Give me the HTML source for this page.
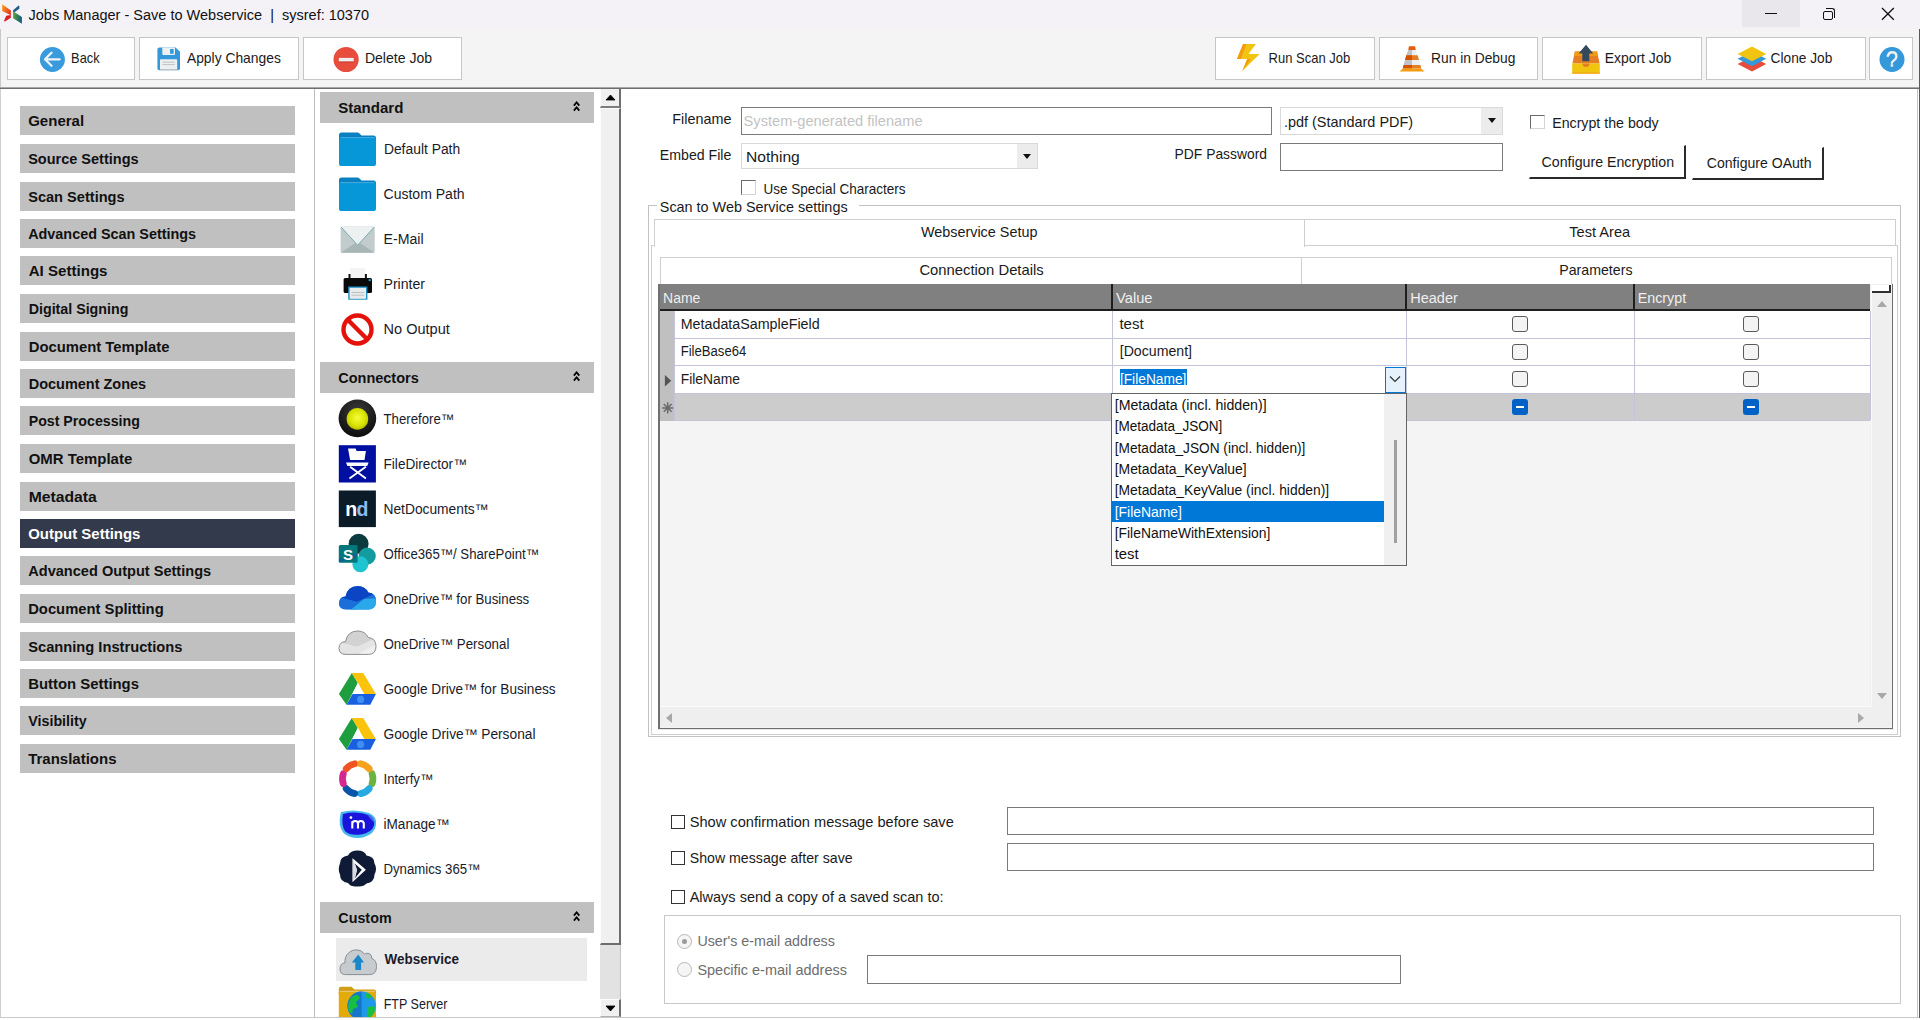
<!DOCTYPE html>
<html><head><meta charset="utf-8">
<style>
*{box-sizing:border-box;margin:0;padding:0}
html,body{width:1920px;height:1020px;overflow:hidden;background:#fff;font-family:"Liberation Sans",sans-serif;color:#000}
.a{position:absolute}
#title{left:0;top:0;width:1920px;height:29px;background:#f4f1f7}
#title .t{left:30px;top:5.5px;font-size:15.5px;color:#111;white-space:pre}
#tb{left:0;top:29px;width:1920px;height:59px;background:#f4f4f4;border-left:1px solid #c8c8c8}
#tbline{left:0;top:87px;width:1920px;height:2px;background:#6e6e6e;border-top:1px solid #a8a8a8}
.btn{background:#fff;border:1px solid #c6c6c6;height:43px;top:37px}
.btn .l{position:absolute;top:12px;font-size:14.5px;color:#1a1a1a;white-space:nowrap}
#side{left:0;top:89px;width:315px;height:928px;background:#fff;border-left:1px solid #cfcfcf;border-right:1px solid #bcbcbc}
.si{left:20px;width:275px;height:29px;background:#c0c0c0;font-weight:bold;font-size:15px;color:#111;padding-left:8px;line-height:29px}
.x{display:inline-block;transform-origin:0 0}
.si.sel{background:#333a4b;color:#fff}
#mid{left:315px;top:89px;width:285px;height:928px;background:#fff}
.sh{left:320px;width:274px;height:31px;background:#c0c0c0;font-weight:bold;font-size:15px;color:#111;padding-left:18px;line-height:31px}
.sh .chev{position:absolute;left:250px;top:0}
.it{left:383px;font-size:14px;color:#1a1a2a;white-space:nowrap;margin-top:1px}
.ic{left:339px;width:37px;height:37px}
#vs{left:600px;top:89px;width:21px;height:928px;background:#e2e2e2}
#main{left:621px;top:89px;width:1296px;height:928px;background:#fff}
.lbl{font-size:14.5px;color:#1a1a1a;white-space:nowrap}
</style></head><body>
<!-- title bar -->
<div id="title" class="a">
  <svg class="a" style="left:0px;top:0px" width="26" height="28" viewBox="0 0 26 28">
    <defs><linearGradient id="lg1" x1="0" y1="0" x2="1" y2="0.6"><stop offset="0" stop-color="#f9a51a"></stop><stop offset="1" stop-color="#e53a22"></stop></linearGradient>
    <linearGradient id="lg2" x1="0" y1="0" x2="1" y2="0.3"><stop offset="0" stop-color="#5cae3b"></stop><stop offset="1" stop-color="#1b5c78"></stop></linearGradient></defs>
    <path d="M2.2 4.2L10.9 10.6V15.2L2.2 10.9Z" fill="url(#lg1)"></path>
    <path d="M10.9 15L10.9 17.8L4.6 21.8L4.2 20.6L6.2 15.8Z" fill="#d9202a"></path>
    <path d="M18.6 5.6Q19.6 5.8 19.5 8.6L13.1 13.2V10.2Z" fill="#1d5f86"></path>
    <path d="M13.1 11.3L21.9 16.9V23.8L13.1 18.2Z" fill="url(#lg2)"></path>
  </svg>
  <div class="a t" style="transform-origin: 0px 0px; transform: translateX(-1.5px) scaleX(0.936);">Jobs Manager - Save to Webservice  |  sysref: 10370</div>
  <div class="a" style="left:1742px;top:0;width:58px;height:27px;background:#e9e6ec"></div>
  <div class="a" style="left:1765px;top:13px;width:12px;height:1.3px;background:#111"></div>
  <div class="a" style="left:1823px;top:10.5px;width:9.5px;height:9.5px;border:1.2px solid #111;border-radius:2px;background:#f4f1f7"></div>
  <div class="a" style="left:1825.5px;top:8px;width:9.5px;height:9.5px;border-top:1.2px solid #111;border-right:1.2px solid #111;border-radius:0 3px 0 0"></div>
  <svg class="a" style="left:1881px;top:7px" width="14" height="14" viewBox="0 0 14 14"><path d="M1 1L12.8 12.8M12.8 1L1 12.8" stroke="#111" stroke-width="1.3"></path></svg>
</div>
<!-- toolbar -->
<div id="tb" class="a"></div>
<div id="tbline" class="a"></div>

<div class="a btn" style="left:7px;width:128px">

  <div class="l" style="left: 65px; transform-origin: 0px 0px; transform: translateX(-1.9px) scaleX(0.8832);">Back</div>
</div>
<div class="a btn" style="left:139px;width:160px">

  <div class="l" style="left: 47px; transform-origin: 0px 0px; transform: translateX(-0.1px) scaleX(0.9554);">Apply Changes</div>
</div>
<div class="a btn" style="left:303px;width:159px">

  <div class="l" style="left: 61px; transform-origin: 0px 0px; transform: translateX(-0.1px) scaleX(0.9696);">Delete Job</div>
</div>
<div class="a btn" style="left:1215px;width:160px">

  <div class="l" style="left: 52px; transform-origin: 0px 0px; transform: translateX(0.6px) scaleX(0.8968);">Run Scan Job</div>
</div>
<div class="a btn" style="left:1379px;width:159px">

  <div class="l" style="left: 51px; transform-origin: 0px 0px; transform: translateX(0.1px) scaleX(0.9501);">Run in Debug</div>
</div>
<div class="a btn" style="left:1542px;width:160px">

  <div class="l" style="left: 61px; transform-origin: 0px 0px; transform: translateX(0.7px) scaleX(0.9615);">Export Job</div>
</div>
<div class="a btn" style="left:1706px;width:160px">

  <div class="l" style="left: 63px; transform-origin: 0px 0px; transform: translateX(0.6px) scaleX(0.9441);">Clone Job</div>
</div>
<div class="a btn" style="left:1869px;width:44px">

</div>

<div id="side" class="a"></div>
<div class="a si" style="top:106px"><span class="x" style="transform-origin: 0px 0px; transform: translateX(0.15px) scaleX(1.0023);">General</span></div>
<div class="a si" style="top:144px"><span class="x" style="transform-origin: 0px 0px; transform: translateX(0.15px) scaleX(0.9673);">Source Settings</span></div>
<div class="a si" style="top:182px"><span class="x" style="transform-origin: 0px 0px; transform: translateX(0.15px) scaleX(0.9725);">Scan Settings</span></div>
<div class="a si" style="top:219px"><span class="x" style="transform-origin: 0px 0px; transform: translateX(0.15px) scaleX(0.9594);">Advanced Scan Settings</span></div>
<div class="a si" style="top:256px"><span class="x" style="transform-origin: 0px 0px; transform: translateX(0.7px) scaleX(1.0059);">AI Settings</span></div>
<div class="a si" style="top:294px"><span class="x" style="transform-origin: 0px 0px; transform: translateX(0.7px) scaleX(0.949);">Digital Signing</span></div>
<div class="a si" style="top:332px"><span class="x" style="transform-origin: 0px 0px; transform: translateX(0.7px) scaleX(0.989);">Document Template</span></div>
<div class="a si" style="top:369px"><span class="x" style="transform-origin: 0px 0px; transform: translateX(0.7px) scaleX(0.9653);">Document Zones</span></div>
<div class="a si" style="top:406px"><span class="x" style="transform-origin: 0px 0px; transform: translateX(0.7px) scaleX(0.9455);">Post Processing</span></div>
<div class="a si" style="top:444px"><span class="x" style="transform-origin: 0px 0px; transform: translateX(0.7px) scaleX(0.9961);">OMR Template</span></div>
<div class="a si" style="top:482px"><span class="x" style="transform-origin: 0px 0px; transform: translateX(0.7px) scaleX(1.0479);">Metadata</span></div>
<div class="a si sel" style="top:519px"><span class="x" style="transform-origin: 0px 0px; transform: translateX(0.2px) scaleX(0.9973);">Output Settings</span></div>
<div class="a si" style="top:556px"><span class="x" style="transform-origin: 0px 0px; transform: translateX(0.2px) scaleX(0.9715);">Advanced Output Settings</span></div>
<div class="a si" style="top:594px"><span class="x" style="transform-origin: 0px 0px; transform: translateX(0.2px) scaleX(0.9853);">Document Splitting</span></div>
<div class="a si" style="top:632px"><span class="x" style="transform-origin: 0px 0px; transform: translateX(0.2px) scaleX(0.9788);">Scanning Instructions</span></div>
<div class="a si" style="top:669px"><span class="x" style="transform-origin: 0px 0px; transform: translateX(0.2px) scaleX(0.9923);">Button Settings</span></div>
<div class="a si" style="top:706px"><span class="x" style="transform-origin: 0px 0px; transform: translateX(0.2px) scaleX(0.9533);">Visibility</span></div>
<div class="a si" style="top:744px"><span class="x" style="transform-origin: 0px 0px; transform: translateX(0.2px) scaleX(0.9993);">Translations</span></div>
<div id="mid" class="a"></div>
<div class="a sh" style="top:92px"><span class="x" style="transform-origin: 0px 0px; transform: translateX(0.2px) scaleX(1.0029);">Standard</span><svg class="chev" width="20" height="31" viewBox="0 0 20 31"><path d="M3.9 13.6L6.6 10.3L9.3 13.6M3.9 18.6L6.6 15.3L9.3 18.6" stroke="#000" stroke-width="1.8" fill="none"></path></svg></div>
<svg class="a ic" style="top:131px" viewBox="0 0 37 37"><path d="M0 4Q0 1.4 2.5 1.4H18.5Q19.5 1.4 20.5 2.4L22.5 4.4H34.5Q37 4.4 37 7V9H0Z" fill="#0b80c0"></path><rect x="0" y="6.2" width="37" height="28.9" rx="2.6" fill="#0597d8"></rect><rect x="1.5" y="6.2" width="34" height="0.9" fill="#4fb0e0"></rect></svg>
<div class="a it" style="top: 140px; transform-origin: 0px 0px; transform: translateX(0.9px) scaleX(0.99);">Default Path</div>
<svg class="a ic" style="top:176px" viewBox="0 0 37 37"><path d="M0 4Q0 1.4 2.5 1.4H18.5Q19.5 1.4 20.5 2.4L22.5 4.4H34.5Q37 4.4 37 7V9H0Z" fill="#0b80c0"></path><rect x="0" y="6.2" width="37" height="28.9" rx="2.6" fill="#0597d8"></rect><rect x="1.5" y="6.2" width="34" height="0.9" fill="#4fb0e0"></rect></svg>
<div class="a it" style="top: 185px; transform-origin: 0px 0px; transform: translateX(0.5px) scaleX(1.002);">Custom Path</div>
<svg class="a ic" style="top:221px;overflow:visible" viewBox="0 0 37 37"><rect x="1.6" y="5.6" width="34.1" height="26.1" rx="1.8" fill="#c3cccc"></rect><path d="M1.6 31.7L18.7 20.5L35.7 31.7Z" fill="#a9b6b6"></path><path d="M1.6 5.6H35.7L18.7 24.4Z" fill="#eef1f1"></path><path d="M2 6L18.7 24.2L35.3 6" fill="none" stroke="#6aa5aa" stroke-width="0.9"></path></svg>
<div class="a it" style="top: 230px; transform-origin: 0px 0px; transform: translateX(0.5px) scaleX(1.0111);">E-Mail</div>
<svg class="a ic" style="top:266px;overflow:visible" viewBox="0 0 37 37"><rect x="11.2" y="2" width="15" height="10" fill="#f4f4f4"></rect><rect x="9.5" y="8" width="2" height="4" fill="#111"></rect><rect x="25.9" y="8" width="2" height="4" fill="#111"></rect><rect x="4.6" y="11.9" width="28.4" height="15.1" rx="1.5" fill="#0a0a0a"></rect><rect x="9.2" y="20.5" width="19.2" height="13.2" fill="#1b8fc4"></rect><rect x="10.6" y="21.8" width="16.4" height="11" fill="#e8eced"></rect><path d="M12.5 26.5H25M12.5 29.2H25" stroke="#b9c0c4" stroke-width="1"></path><circle cx="30.7" cy="14.1" r="1.2" fill="#1fa6e0"></circle></svg>
<div class="a it" style="top: 275px; transform-origin: 0px 0px; transform: translateX(0.5px) scaleX(1.0066);">Printer</div>
<svg class="a ic" style="top:311px" viewBox="0 0 37 37"><circle cx="18.5" cy="18.5" r="14" fill="none" stroke="#e3120b" stroke-width="4.4"></circle><path d="M9 9L28 28" stroke="#e3120b" stroke-width="4.4"></path></svg>
<div class="a it" style="top: 320px; transform-origin: 0px 0px; transform: translateX(0.5px) scaleX(1.0393);">No Output</div>
<div class="a sh" style="top:362px"><span class="x" style="transform-origin: 0px 0px; transform: translateX(0.2px) scaleX(0.9667);">Connectors</span><svg class="chev" width="20" height="31" viewBox="0 0 20 31"><path d="M3.9 13.6L6.6 10.3L9.3 13.6M3.9 18.6L6.6 15.3L9.3 18.6" stroke="#000" stroke-width="1.8" fill="none"></path></svg></div>
<svg class="a ic" style="top:401px;overflow:visible" viewBox="0 0 37 37"><defs><radialGradient id="tg" cx="0.5" cy="0.45" r="0.55"><stop offset="0" stop-color="#f4ff3a"></stop><stop offset="0.7" stop-color="#d8e000"></stop><stop offset="1" stop-color="#b9c000"></stop></radialGradient><radialGradient id="tg2" cx="0.5" cy="0.3" r="0.7"><stop offset="0" stop-color="#3a3a3a"></stop><stop offset="1" stop-color="#0d0d0d"></stop></radialGradient></defs><circle cx="18.4" cy="17.4" r="18.8" fill="url(#tg2)"></circle><circle cx="18.4" cy="17.9" r="10.8" fill="url(#tg)"></circle></svg>
<div class="a it" style="top: 410px; transform-origin: 0px 0px; transform: translateX(0.5px) scaleX(0.9443);">Therefore™</div>
<svg class="a ic" style="top:446px;overflow:visible" viewBox="0 0 37 37"><rect x="-0.2" y="-0.8" width="37.1" height="37.3" fill="#000f9f"></rect><path d="M9 2.5H16.6L17.6 5H26.9L25.5 13.9H11.1Z" fill="#fff"></path><path d="M7 16.6H29.6L28.2 20H8.4Z" fill="#fff"></path><path d="M10.4 32.4L26.9 20.7M26.9 32.4L11.1 20.7" stroke="#fff" stroke-width="1.9"></path></svg>
<div class="a it" style="top: 455px; transform-origin: 0px 0px; transform: translateX(0.5px) scaleX(0.9731);">FileDirector™</div>
<svg class="a ic" style="top:491px;overflow:visible" viewBox="0 0 37 37"><rect x="-0.2" y="-0.5" width="37.1" height="36.6" fill="#0b1b28"></rect><text x="6.3" y="25.1" font-family="Liberation Sans" font-weight="bold" font-size="19.5" letter-spacing="-0.8" fill="#fff">n<tspan fill="#8dbdf0">d</tspan></text></svg>
<div class="a it" style="top: 500px; transform-origin: 0px 0px; transform: translateX(0.5px) scaleX(0.984);">NetDocuments™</div>
<svg class="a ic" style="top:536px;overflow:visible" viewBox="0 0 37 37"><circle cx="19.6" cy="7.8" r="10" fill="#0b3b3e"></circle><circle cx="28.2" cy="20" r="8.6" fill="#139c9f"></circle><circle cx="21.4" cy="28.3" r="8" fill="#20c3d0"></circle><rect x="-0.2" y="9" width="18.8" height="17.8" rx="1.5" fill="#03787c"></rect><path d="M-0.2 23L18.6 17V20.5L-0.2 26.5Z" fill="#1b4f9e" opacity="0.5"></path><text x="4" y="23.5" font-family="Liberation Sans" font-weight="bold" font-size="15" fill="#fff">S</text></svg>
<div class="a it" style="top: 545px; transform-origin: 0px 0px; transform: translateX(0.5px) scaleX(0.9437);">Office365™/ SharePoint™</div>
<svg class="a ic" style="top:581px;overflow:visible" viewBox="0 0 37 37"><defs><clipPath id="odc"><path d="M7 28.4Q0 28.4 0 22.3Q0 16 6.5 15.6Q8.5 5 18.9 5Q26 5 29.3 11.5Q37 12.3 37 20.2Q37 28.4 29.5 28.4Z"></path></clipPath></defs>
<g clip-path="url(#odc)"><rect x="-1" y="0" width="40" height="30" fill="#1f7fe0"></rect><path d="M-1 0H40V11L18 21L-1 16Z" fill="#0c45c4"></path><path d="M-1 16L18 21L40 11V17L18 28.5H-1Z" fill="#1a6fd8"></path><path d="M12 28.5L25 18L40 17V30H12Z" fill="#29a8ea"></path></g></svg>
<div class="a it" style="top: 590px; transform-origin: 0px 0px; transform: translateX(0.5px) scaleX(0.946);">OneDrive™ for Business</div>
<svg class="a ic" style="top:626px;overflow:visible" viewBox="0 0 37 37"><defs><clipPath id="odc2"><path d="M7 28.4Q0 28.4 0 22.3Q0 16 6.5 15.6Q8.5 5 18.9 5Q26 5 29.3 11.5Q37 12.3 37 20.2Q37 28.4 29.5 28.4Z"></path></clipPath></defs>
<g clip-path="url(#odc2)"><rect x="-1" y="0" width="40" height="30" fill="#efefef"></rect><path d="M-1 0H40V11L18 21L-1 16Z" fill="#d2d2d2"></path><path d="M-1 16L18 21L40 11V17L18 28.5H-1Z" fill="#e4e4e4"></path></g>
<path d="M7 28.4Q0 28.4 0 22.3Q0 16 6.5 15.6Q8.5 5 18.9 5Q26 5 29.3 11.5Q37 12.3 37 20.2Q37 28.4 29.5 28.4Z" fill="none" stroke="#8e8e8e" stroke-width="1"></path></svg>
<div class="a it" style="top: 635px; transform-origin: 0px 0px; transform: translateX(0.5px) scaleX(0.9514);">OneDrive™ Personal</div>
<svg class="a ic" style="top:671px;overflow:visible" viewBox="0 0 37 37"><path d="M12.8 1.9L18.9 12L7.5 33.7L-0.1 23.1Z" fill="#1e9e3e"></path><path d="M12.8 1.9H24.2L36.9 23.1H25.3Z" fill="#fbc30b"></path><path d="M7.5 33.7H31.3L36.9 23.1H13.6Z" fill="#1a5fe0"></path><path d="M18.9 11.6L24.3 23.1H13.5Z" fill="#fff"></path><circle cx="21.6" cy="28.4" r="3.6" fill="#3d8ff2"></circle></svg>
<div class="a it" style="top: 680px; transform-origin: 0px 0px; transform: translateX(0.5px) scaleX(0.9747);">Google Drive™ for Business</div>
<svg class="a ic" style="top:716px;overflow:visible" viewBox="0 0 37 37"><path d="M12.8 1.9L18.9 12L7.5 33.7L-0.1 23.1Z" fill="#1e9e3e"></path><path d="M12.8 1.9H24.2L36.9 23.1H25.3Z" fill="#fbc30b"></path><path d="M7.5 33.7H31.3L36.9 23.1H13.6Z" fill="#1a5fe0"></path><path d="M18.9 11.6L24.3 23.1H13.5Z" fill="#fff"></path><circle cx="21.6" cy="28.4" r="3.6" fill="#3d8ff2"></circle></svg>
<div class="a it" style="top: 725px; transform-origin: 0px 0px; transform: translateX(0.5px) scaleX(0.9814);">Google Drive™ Personal</div>
<svg class="a ic" style="top:761px;overflow:visible" viewBox="0 0 37 37"><path d="M33.07 12.75A15.2 15.2 0 0 1 33.07 22.65" stroke="#6db33f" stroke-width="6.8" fill="none" stroke-linecap="round"></path><path d="M30.17 27.67A15.2 15.2 0 0 1 21.60 32.62" stroke="#27aae1" stroke-width="6.8" fill="none" stroke-linecap="round"></path><path d="M15.80 32.62A15.2 15.2 0 0 1 7.23 27.67" stroke="#0b55a8" stroke-width="6.8" fill="none" stroke-linecap="round"></path><path d="M4.33 22.65A15.2 15.2 0 0 1 4.33 12.75" stroke="#d6288f" stroke-width="6.8" fill="none" stroke-linecap="round"></path><path d="M7.23 7.73A15.2 15.2 0 0 1 15.80 2.78" stroke="#f05423" stroke-width="6.8" fill="none" stroke-linecap="round"></path><path d="M21.60 2.78A15.2 15.2 0 0 1 30.17 7.73" stroke="#f7a11a" stroke-width="6.8" fill="none" stroke-linecap="round"></path></svg>
<div class="a it" style="top: 770px; transform-origin: 0px 0px; transform: translateX(0.5px) scaleX(0.9363);">Interfy™</div>
<svg class="a ic" style="top:806px;overflow:visible" viewBox="0 0 37 37"><path d="M2 6Q16 2.5 30 7Q38 10 37 19Q36 28 24 31.5Q12 33.5 4.5 27Q-1 20 1.3 9Z" fill="#45b8ec"></path><path d="M4 8Q18 4.5 31 9.5Q36.5 13 35 19.5Q33 26.5 22 28.5Q11 30 6 25Q2 19 4 8Z" fill="#1a14dc"></path><path d="M28 8.5Q36 11 35.5 17L30 11Z" fill="#5a7ee8" opacity="0.8"></path>
<circle cx="11.9" cy="11.6" r="1.4" fill="#fff"></circle><path d="M13.3 22.5V15.2M13.3 17.8Q13.3 15 16.2 15Q19 15 19 17.8V22.5M19 17.8Q19 15 21.9 15Q24.8 15 24.8 17.8V22.5" stroke="#fff" stroke-width="2.1" fill="none"></path></svg>
<div class="a it" style="top: 815px; transform-origin: 0px 0px; transform: translateX(0.5px) scaleX(0.9715);">iManage™</div>
<svg class="a ic" style="top:851px;overflow:visible" viewBox="0 0 37 37"><path d="M18.5 -0.5Q25.5 -0.5 27.5 4.5Q35.5 5.5 35.5 12.5Q38.5 17.5 35.5 23.5Q35.5 31 27.5 32.5Q24.5 36 18.5 35.5Q11.5 36 9 32Q1 31 1 23.5Q-1.5 18 1 12.5Q1 5.5 9 4.5Q11.5 -0.5 18.5 -0.5Z" fill="#0f1a36"></path>
<path d="M13.6 7.2L26.9 18.7L13.6 31Z" fill="#fff"></path><path d="M15.8 12.5L22.8 18.7L15.8 27.5L18 19Z" fill="#0f1a36"></path><path d="M13.6 7.2L15.8 12.5L18 19L15.8 27.5L13.6 31Z" fill="#d8dbe2"></path></svg>
<div class="a it" style="top: 860px; transform-origin: 0px 0px; transform: translateX(0.5px) scaleX(0.942);">Dynamics 365™</div>
<div class="a sh" style="top:902px"><span class="x" style="transform-origin: 0px 0px; transform: translateX(0.3px) scaleX(0.9554);">Custom</span><svg class="chev" width="20" height="31" viewBox="0 0 20 31"><path d="M3.9 13.6L6.6 10.3L9.3 13.6M3.9 18.6L6.6 15.3L9.3 18.6" stroke="#000" stroke-width="1.8" fill="none"></path></svg></div>
<div class="a" style="left:336px;top:938px;width:251px;height:43px;background:#ebebeb"></div>
<svg class="a ic" style="top:941px;overflow:visible" viewBox="0 0 37 37"><path d="M6.5 33.6Q1 33.6 1 28Q1 22.5 6 21.8Q5.5 15.5 9.5 12Q13 8.5 17.5 8.8Q22.5 8.8 25.5 13Q27.5 11.8 30 12.5Q33 13.5 32.8 17.5Q37.5 19 37.5 25.5Q37.5 33.6 30.5 33.6Z" fill="#c6cbcf" stroke="#7f878c" stroke-width="0.9"></path>
<path d="M19.2 13.6L25 21.5H22.1V29H16.3V21.5H12.9Z" fill="#1a87c9"></path></svg>
<div class="a it" style="top: 950px; left: 385px; font-weight: bold; transform-origin: 0px 0px; transform: translateX(-0.5px) scaleX(0.9611);">Webservice</div>
<svg class="a ic" style="top:986px;overflow:visible" viewBox="0 0 37 37"><defs><clipPath id="ftpc"><rect x="-2" y="-2" width="41" height="33"></rect></clipPath></defs><g clip-path="url(#ftpc)">
<path d="M-0.2 3Q-0.2 0.7 2 0.7H12.5L15.5 3.5H35Q37 3.5 37 5.5V9H-0.2Z" fill="#cf9e12"></path><rect x="-0.2" y="4.8" width="37.2" height="30" rx="1.5" fill="#e3ab0a"></rect><rect x="1" y="4.8" width="35" height="1.2" fill="#e9c46a"></rect>
<circle cx="22.7" cy="19.8" r="14.2" fill="#1e98e8"></circle><path d="M22.7 5.6A14.2 14.2 0 0 0 22.7 34Z" fill="#1577c8"></path>
<path d="M11 13Q14 9 19 9L21 12L17 16L19 21L14 23L13 28L9.5 25Q8.5 19 11 13Z" fill="#17bf40"></path><path d="M28 22Q32 19 36 21Q36 28 31 32Q27 31 28 26Z" fill="#17c040"></path><path d="M26 7Q30 7.5 33 10L30 13L27 11Z" fill="#17c040"></path></g></svg>
<div class="a it" style="top: 995px; transform-origin: 0px 0px; transform: translateX(0.7px) scaleX(0.8946);">FTP Server</div>

<div id="main" class="a"></div>
<!-- form top -->
<div class="a lbl" style="left: 673px; top: 111px; transform-origin: 0px 0px; transform: translateX(-0.8px) scaleX(0.9925);">Filename</div>
<div class="a" style="left:741px;top:107px;width:531px;height:28px;border:1.5px solid #7a7a7a;background:#fff"></div>
<div class="a lbl" style="left: 744px; top: 113px; color: rgb(195, 195, 195); transform-origin: 0px 0px; transform: translateX(-0.4px) scaleX(1.0095);">System-generated filename</div>
<div class="a" style="left:1280px;top:107px;width:223px;height:28px;border:1px solid #d9d9d9;background:#fff"></div>
<div class="a" style="left:1481px;top:108px;width:21px;height:26px;background:#ececec"></div>
<svg class="a" style="left:1488px;top:118px" width="8" height="5" viewBox="0 0 8 5"><path d="M0 0H8L4 5Z" fill="#111"></path></svg>
<div class="a lbl" style="left: 1285px; top: 114px; transform-origin: 0px 0px; transform: translateX(-1.1px) scaleX(0.9957);">.pdf (Standard PDF)</div>
<div class="a" style="left:1530px;top:114.5px;width:14.5px;height:14.5px;border:1px solid #d4d4d4;border-left:1.6px solid #6a6a6a;border-top:1.6px solid #6a6a6a;background:#fff"></div>
<div class="a lbl" style="left: 1552px; top: 115px; transform-origin: 0px 0px; transform: translateX(0.2px) scaleX(0.9784);">Encrypt the body</div>

<div class="a lbl" style="left: 660px; top: 147px; transform-origin: 0px 0px; transform: translateX(-0.2px) scaleX(0.9759);">Embed File</div>
<div class="a" style="left:741px;top:143px;width:297px;height:26px;border:1px solid #d9d9d9;background:#fff"></div>
<div class="a" style="left:1017px;top:144px;width:20px;height:24px;background:#ececec"></div>
<svg class="a" style="left:1023px;top:154px" width="8" height="5" viewBox="0 0 8 5"><path d="M0 0H8L4 5Z" fill="#111"></path></svg>
<div class="a lbl" style="left: 746px; top: 149px; transform-origin: 0px 0px; transform: translateX(0px) scaleX(1.0759);">Nothing</div>
<div class="a lbl" style="left: 1175px; top: 146px; transform-origin: 0px 0px; transform: translateX(-0.4px) scaleX(0.955);">PDF Password</div>
<div class="a" style="left:1280px;top:143px;width:223px;height:28px;border:1.5px solid #7a7a7a;background:#fff"></div>
<div class="a" style="left:1529px;top:145px;width:157px;height:34px;border:1px solid #fff;border-right:2px solid #2a2a2a;border-bottom:2px solid #2a2a2a;background:#fff"></div>
<div class="a lbl" style="left: 1542px; top: 154px; transform-origin: 0px 0px; transform: translateX(-0.5px) scaleX(0.979);">Configure Encryption</div>
<div class="a" style="left:1692px;top:147px;width:132px;height:33px;border:1px solid #fff;border-right:2px solid #2a2a2a;border-bottom:2px solid #2a2a2a;background:#fff"></div>
<div class="a lbl" style="left: 1706px; top: 155px; transform-origin: 0px 0px; transform: translateX(0.8px) scaleX(0.97);">Configure OAuth</div>

<div class="a" style="left:741px;top:180px;width:15px;height:15px;border:1px solid #d4d4d4;border-left:1.6px solid #6a6a6a;border-top:1.6px solid #6a6a6a;background:#fff"></div>
<div class="a lbl" style="left: 763px; top: 181px; transform-origin: 0px 0px; transform: translateX(0.5px) scaleX(0.9324);">Use Special Characters</div>

<!-- group box -->
<div class="a" style="left:647.5px;top:204.5px;width:1253.5px;height:532.5px;border:1px solid #c2c2c2"></div>
<div class="a" style="left:657px;top:200px;width:202px;height:10px;background:#fff"></div>
<div class="a lbl" style="left: 660px; top: 198.5px; transform-origin: 0px 0px; transform: translateX(-0.2px) scaleX(0.9929);">Scan to Web Service settings</div>

<!-- outer tab -->
<div class="a" style="left:651px;top:245px;width:1247px;height:490px;border:1px solid #cfcfcf;background:#fff"></div>
<div class="a" style="left:654px;top:219px;width:651px;height:28px;border:1px solid #cfcfcf;border-bottom:none;background:#fff"></div>
<div class="a" style="left:1304px;top:219px;width:592px;height:27px;border:1px solid #cfcfcf;background:#fff"></div>
<div class="a lbl" style="left: 921px; top: 224px; transform-origin: 0px 0px; transform: translateX(-0.1px) scaleX(0.9922);">Webservice Setup</div>
<div class="a lbl" style="left: 1569px; top: 224px; transform-origin: 0px 0px; transform: translateX(0.3px) scaleX(1.0058);">Test Area</div>
<!-- inner tab -->
<div class="a" style="left:660px;top:257px;width:642px;height:28px;border:1px solid #cfcfcf;border-bottom:none;background:#fff"></div>
<div class="a" style="left:1301px;top:257px;width:591px;height:28px;border:1px solid #cfcfcf;background:#fff"></div>
<div class="a lbl" style="left: 920px; top: 262px; transform-origin: 0px 0px; transform: translateX(-0.6px) scaleX(1.0214);">Connection Details</div>
<div class="a lbl" style="left: 1560px; top: 262px; transform-origin: 0px 0px; transform: translateX(-0.8px) scaleX(0.9776);">Parameters</div>

<!-- grid -->
<div class="a" style="left:657.5px;top:283.5px;width:1236px;height:446.5px;border-left:1px solid #d8d8d8;border-bottom:1px solid #e8e8e8"></div>
<div class="a" style="left:658px;top:284px;width:1235px;height:445px;background:#f4f4f4;border-left:2px solid #707070;border-right:1.5px solid #6e6e6e;border-bottom:1.5px solid #6e6e6e"></div>
<div class="a" style="left:660px;top:284px;width:1210px;height:27px;background:#808080;border-bottom:2px solid #1e1e1e"></div>
<div class="a" style="left:1111px;top:284px;width:2px;height:26px;background:#1e1e1e"></div>
<div class="a" style="left:1405px;top:284px;width:2px;height:26px;background:#1e1e1e"></div>
<div class="a" style="left:1633px;top:284px;width:2px;height:26px;background:#1e1e1e"></div>
<div class="a lbl" style="left: 664px; top: 290px; color: rgb(239, 239, 239); font-size: 14px; transform-origin: 0px 0px; transform: translateX(-0.9px) scaleX(0.9984);">Name</div>
<div class="a lbl" style="left: 1117px; top: 290px; color: rgb(239, 239, 239); font-size: 14px; transform-origin: 0px 0px; transform: translateX(-0.9px) scaleX(1.0479);">Value</div>
<div class="a lbl" style="left: 1411px; top: 290px; color: rgb(239, 239, 239); font-size: 14px; transform-origin: 0px 0px; transform: translateX(-0.8px) scaleX(1.0374);">Header</div>
<div class="a lbl" style="left: 1639px; top: 290px; color: rgb(239, 239, 239); font-size: 14px; transform-origin: 0px 0px; transform: translateX(-1.3px) scaleX(1.02);">Encrypt</div>
<!-- vscroll of grid -->
<div class="a" style="left:1870px;top:284px;width:21px;height:423px;background:#efefef"></div>
<div class="a" style="left:1871px;top:285px;width:20px;height:8px;background:#fff;border:2px solid #303030;border-top:none;border-left:none"></div>
<svg class="a" style="left:1876px;top:300px" width="12" height="8" viewBox="0 0 12 8"><path d="M1 7L6 1L11 7Z" fill="#a8a8a8"></path></svg>
<svg class="a" style="left:1876px;top:692px" width="12" height="8" viewBox="0 0 12 8"><path d="M1 1L6 7L11 1Z" fill="#a8a8a8"></path></svg>
<div class="a" style="left:660px;top:707px;width:1231px;height:20px;background:#efefef"></div>
<div class="a" style="left:1871px;top:284px;width:1px;height:423px;background:#fafafa"></div>
<div class="a" style="left:660px;top:706px;width:1212px;height:1px;background:#fafafa"></div>
<svg class="a" style="left:665px;top:712px" width="8" height="12" viewBox="0 0 8 12"><path d="M7 1L1 6L7 11Z" fill="#a8a8a8"></path></svg>
<svg class="a" style="left:1857px;top:712px" width="8" height="12" viewBox="0 0 8 12"><path d="M1 1L7 6L1 11Z" fill="#a8a8a8"></path></svg>
<div class="a" style="left:660px;top:311px;width:14px;height:28px;background:#c0c0c0"></div>
<div class="a" style="left:674px;top:311px;width:1196px;height:28px;background:#fff;border-bottom:1px solid #c3c3d9"></div>
<div class="a lbl" style="left: 681px; top: 316px; font-size: 14px; transform-origin: 0px 0px; transform: translateX(-0.3px) scaleX(1.0201);">MetadataSampleField</div>
<div class="a lbl" id="k-test-row" style="left: 1120px; top: 316px; font-size: 14px; transform-origin: 0px 0px; transform: translateX(-0.6px) scaleX(1.0752);">test</div>
<div class="a" style="left:660px;top:339px;width:14px;height:27px;background:#c0c0c0"></div>
<div class="a" style="left:674px;top:339px;width:1196px;height:27px;background:#fff;border-bottom:1px solid #c3c3d9"></div>
<div class="a lbl" style="left: 681px; top: 343px; font-size: 14px; transform-origin: 0px 0px; transform: translateX(-0.3px) scaleX(0.9356);">FileBase64</div>
<div class="a lbl" style="left: 1120px; top: 343px; font-size: 14px; transform-origin: 0px 0px; transform: translateX(-0.3px) scaleX(1.01);">[Document]</div>
<div class="a" style="left:660px;top:366px;width:14px;height:28px;background:#c0c0c0"></div>
<div class="a" style="left:674px;top:366px;width:1196px;height:28px;background:#fff;border-bottom:1px solid #c3c3d9"></div>
<div class="a lbl" style="left: 681px; top: 370.5px; font-size: 14px; transform-origin: 0px 0px; transform: translateX(-0.3px) scaleX(0.988);">FileName</div>
<div class="a" style="left:660px;top:394px;width:1210px;height:27px;background:#cccccc;border-bottom:1px solid #c3c3d9"></div>
<div class="a" style="left:660px;top:394px;width:14px;height:27px;background:#c0c0c0"></div>

<svg class="a" style="left:664px;top:374px" width="8" height="13" viewBox="0 0 8 13"><path d="M0.9 1L7.2 6.7L0.9 12.5Z" fill="#555"></path></svg>
<svg class="a" style="left:661px;top:401px" width="14" height="14" viewBox="0 0 14 14"><path d="M6.7 1.3V12.5M1.1 6.9H12.3M2.8 3L10.6 10.8M10.6 3L2.8 10.8" stroke="#6a6a6a" stroke-width="1.5"></path><circle cx="6.7" cy="6.9" r="1.8" fill="#6a6a6a"></circle></svg>
<div class="a" style="left:674px;top:311px;width:1px;height:110px;background:#c3c3d9"></div>
<div class="a" style="left:1112px;top:311px;width:1px;height:109px;background:#c3c3d9"></div>
<div class="a" style="left:1406px;top:311px;width:1px;height:109px;background:#c3c3d9"></div>
<div class="a" style="left:1634px;top:311px;width:1px;height:109px;background:#c3c3d9"></div>
<div class="a" style="left:1870px;top:311px;width:1px;height:109px;background:#c3c3d9"></div>
<div class="a" style="left:1512px;top:316px;width:16px;height:16px;border:1.5px solid #5a5a5a;border-radius:3px;background:#f4f4f4"></div>
<div class="a" style="left:1743px;top:316px;width:16px;height:16px;border:1.5px solid #5a5a5a;border-radius:3px;background:#f4f4f4"></div>
<div class="a" style="left:1512px;top:344px;width:16px;height:16px;border:1.5px solid #5a5a5a;border-radius:3px;background:#f4f4f4"></div>
<div class="a" style="left:1743px;top:344px;width:16px;height:16px;border:1.5px solid #5a5a5a;border-radius:3px;background:#f4f4f4"></div>
<div class="a" style="left:1512px;top:371px;width:16px;height:16px;border:1.5px solid #5a5a5a;border-radius:3px;background:#f4f4f4"></div>
<div class="a" style="left:1743px;top:371px;width:16px;height:16px;border:1.5px solid #5a5a5a;border-radius:3px;background:#f4f4f4"></div>
<div class="a" style="left:1512px;top:399px;width:16px;height:16px;border-radius:3px;background:#0062c6"></div>
<div class="a" style="left:1516px;top:406px;width:8px;height:2px;background:#fff"></div>
<div class="a" style="left:1743px;top:399px;width:16px;height:16px;border-radius:3px;background:#0062c6"></div>
<div class="a" style="left:1747px;top:406px;width:8px;height:2px;background:#fff"></div>
<div class="a" style="left:1113px;top:366px;width:293px;height:27px;background:#fff"></div>
<div class="a" style="left:1120px;top:369px;width:67px;height:16px;background:#0078d7"></div>
<div class="a lbl" style="left: 1120px; top: 370.5px; font-size: 14px; color: rgb(255, 255, 255); transform-origin: 0px 0px; transform: translateX(-0.1px) scaleX(0.9822);" id="k-fn-sel">[FileName]</div>
<div class="a" style="left:1385px;top:367px;width:21px;height:26px;border:1px solid #0078d7;background:#e5f1fb"></div>
<svg class="a" style="left:1389px;top:375px" width="12" height="8" viewBox="0 0 12 8"><path d="M1 1.5L6 6.5L11 1.5" stroke="#333" stroke-width="1.2" fill="none"></path></svg>
<!-- dropdown list -->
<div class="a" style="left:1111px;top:393px;width:296px;height:173px;background:#fff;border:1px solid #646464"></div>
<div class="a" style="left:1384px;top:394px;width:22px;height:171px;background:#f0f0f0"></div>
<div class="a" style="left:1394px;top:440px;width:3px;height:103px;background:#a0a0a0"></div>
<div class="a" style="left:1112px;top:501px;width:272px;height:21px;background:#0078d7"></div>
<div class="a lbl" style="left: 1115px; top: 397px; font-size: 14px; color: rgb(17, 17, 17); transform-origin: 0px 0px; transform: translateX(-0.3px) scaleX(1.0114);">[Metadata (incl. hidden)]</div>
<div class="a lbl" style="left: 1115px; top: 418px; font-size: 14px; color: rgb(17, 17, 17); transform-origin: 0px 0px; transform: translateX(-0.3px) scaleX(0.9675);">[Metadata_JSON]</div>
<div class="a lbl" style="left: 1115px; top: 440px; font-size: 14px; color: rgb(17, 17, 17); transform-origin: 0px 0px; transform: translateX(-0.3px) scaleX(0.9762);">[Metadata_JSON (incl. hidden)]</div>
<div class="a lbl" style="left: 1115px; top: 461px; font-size: 14px; color: rgb(17, 17, 17); transform-origin: 0px 0px; transform: translateX(-0.3px) scaleX(0.9928);">[Metadata_KeyValue]</div>
<div class="a lbl" style="left: 1115px; top: 482px; font-size: 14px; color: rgb(17, 17, 17); transform-origin: 0px 0px; transform: translateX(-0.3px) scaleX(0.989);">[Metadata_KeyValue (incl. hidden)]</div>
<div class="a lbl" style="left: 1115px; top: 504px; font-size: 14px; color: rgb(255, 255, 255); transform-origin: 0px 0px; transform: translateX(-0.3px) scaleX(0.9927);">[FileName]</div>
<div class="a lbl" style="left: 1115px; top: 525px; font-size: 14px; color: rgb(17, 17, 17); transform-origin: 0px 0px; transform: translateX(-0.3px) scaleX(0.9906);">[FileNameWithExtension]</div>
<div class="a lbl" style="left: 1115px; top: 546px; font-size: 14px; color: rgb(17, 17, 17); transform-origin: 0px 0px; transform: translateX(-0.3px) scaleX(1.0613);">test</div>

<div class="a" style="left:671px;top:815px;width:14px;height:14px;border:1.5px solid #333;background:#fff"></div>
<div class="a lbl" style="left: 690px; top: 814px; transform-origin: 0px 0px; transform: translateX(-0.3px) scaleX(1.0082);">Show confirmation message before save</div>
<div class="a" style="left:1007px;top:807px;width:867px;height:28px;border:1.5px solid #7a7a7a;background:#fff"></div>
<div class="a" style="left:671px;top:851px;width:14px;height:14px;border:1.5px solid #333;background:#fff"></div>
<div class="a lbl" style="left: 690px; top: 850px; transform-origin: 0px 0px; transform: translateX(-0.3px) scaleX(0.9768);">Show message after save</div>
<div class="a" style="left:1007px;top:843px;width:867px;height:28px;border:1.5px solid #7a7a7a;background:#fff"></div>
<div class="a" style="left:671px;top:890px;width:14px;height:14px;border:1.5px solid #333;background:#fff"></div>
<div class="a lbl" style="left: 690px; top: 889px; transform-origin: 0px 0px; transform: translateX(-0.3px) scaleX(0.9996);">Always send a copy of a saved scan to:</div>
<div class="a" style="left:664px;top:915px;width:1237px;height:89px;border:1px solid #c8c8c8"></div>
<div class="a" style="left:677px;top:934px;width:15px;height:15px;border:1px solid #b8b8b8;border-radius:50%;background:#f5f5f5"></div>
<div class="a" style="left:682px;top:939px;width:5px;height:5px;border-radius:50%;background:#9a9a9a"></div>
<div class="a lbl" style="left: 697px; top: 933px; color: rgb(109, 109, 109); transform-origin: 0px 0px; transform: translateX(0.4px) scaleX(0.9837);">User's e-mail address</div>
<div class="a" style="left:677px;top:962px;width:15px;height:15px;border:1px solid #b8b8b8;border-radius:50%;background:#f5f5f5"></div>
<div class="a lbl" style="left: 697px; top: 962px; color: rgb(109, 109, 109); transform-origin: 0px 0px; transform: translateX(0.4px) scaleX(0.9973);">Specific e-mail address</div>
<div class="a" style="left:867px;top:955px;width:534px;height:29px;border:1.5px solid #7a7a7a;background:#fff"></div>
<svg class="a" style="left:0;top:0" width="1920" height="89" viewBox="0 0 1920 89">
 <!-- back -->
 <circle cx="52.4" cy="59.5" r="12.5" fill="#3a9bdc"></circle>
 <path d="M59.7 59.3H45.5M51.5 52.8L45 59.3L51.5 65.8" stroke="#eef3f6" stroke-width="2.3" fill="none" stroke-linecap="round" stroke-linejoin="round"></path>
 <!-- floppy -->
 <path d="M159.4 47.4H175.7L180 51.7V68.2Q180 70.2 178 70.2H159.4Q157.4 70.2 157.4 68.2V49.4Q157.4 47.4 159.4 47.4Z" fill="#3498db"></path>
 <rect x="162.3" y="47.4" width="12.7" height="7.5" rx="0.8" fill="#ecf0f1"></rect>
 <rect x="170.1" y="49" width="3.5" height="4.8" fill="#3498db"></rect>
 <rect x="160" y="59.2" width="17.2" height="11" rx="0.8" fill="#ecf0f1"></rect>
 <rect x="160" y="69" width="17.2" height="1.2" fill="#bdc3c7"></rect>
 <path d="M162.5 62.2H174.8M162.5 64.6H174.8" stroke="#bdc3c7" stroke-width="1"></path>
 <!-- delete -->
 <circle cx="346.1" cy="59.5" r="12.6" fill="#e74c3c"></circle>
 <rect x="338.8" y="57.9" width="14.9" height="3.7" fill="#ecf0f1"></rect>
 <rect x="338.8" y="61.6" width="14.9" height="0.8" fill="#c0392b"></rect>
 <!-- lightning -->
 <path d="M1243.1 44H1255.9L1248.5 53.9H1259.6L1242.3 70.9L1247.2 59H1236.9Z" fill="#f1c40f"></path>
 <path d="M1243.1 44H1246.5L1240.8 58.9H1236.9Z" fill="#f39c12"></path>
 <path d="M1247.2 59H1251L1242.3 70.9Z" fill="#f39c12"></path>
 <!-- cone -->
 <path d="M1408.9 46.2H1415.1L1415.7 49.9H1408.3Z" fill="#e35d0a"></path>
 <path d="M1408.3 49.9H1415.7L1417.7 55.3H1406.3Z" fill="#ecf0f1"></path>
 <path d="M1408.3 49.9H1412V55.3H1406.3Z" fill="#bdc3c7"></path>
 <path d="M1406.3 55.3H1417.7L1419 60H1405Z" fill="#e67e22"></path>
 <path d="M1406.3 55.3H1412V60H1405Z" fill="#d35400"></path>
 <path d="M1405 60H1419L1420.4 65H1403.6Z" fill="#ecf0f1"></path>
 <path d="M1405 60H1412V65H1403.6Z" fill="#bdc3c7"></path>
 <path d="M1403.6 65H1420.4L1421.2 68.6H1402.8Z" fill="#e67e22"></path>
 <path d="M1403.6 65H1412V68.6H1402.8Z" fill="#d35400"></path>
 <path d="M1402.8 68.5H1421.2L1424.6 71.4H1399.5Z" fill="#f39c12"></path>
 <!-- export -->
 <path d="M1574.9 51.6H1597.1L1599.6 63.5H1572.4Z" fill="#e67e22"></path>
 <path d="M1574.9 51.6H1597.1L1597.8 56H1574.2Z" fill="#f39c12"></path>
 <rect x="1572.2" y="63.5" width="27.6" height="10.1" fill="#f1c40f"></rect>
 <rect x="1572.2" y="72.6" width="27.6" height="1" fill="#f39c12"></rect>
 <path d="M1582.3 63.5H1589.7Q1589 67 1586 67Q1583 67 1582.3 63.5Z" fill="#e67e22"></path>
 <path d="M1586 44.8L1593.2 53.6H1589.3V61.3H1582.3V53.6H1578.6Z" fill="#34495e"></path>
 <!-- clone -->
 <path d="M1752 56.4L1766.2 63.9L1752 71.4L1737.6 63.9Z" fill="#e74c3c"></path>
 <path d="M1752 51.4L1766.2 58.8L1752 66.2L1737.6 58.8Z" fill="#3498db"></path>
 <path d="M1752 46.4L1766.2 53.9L1752 61.3L1737.6 53.9Z" fill="#f1c40f"></path>
 <!-- help -->
 <circle cx="1892" cy="59.5" r="12.5" fill="#3498db"></circle>
 <path d="M1887.8 55.8Q1889 52.2 1892 52.2Q1896.4 52.2 1896.4 56.4Q1896.4 58.4 1894 60.4Q1892 62 1891.9 62.8" stroke="#ecf0f1" stroke-width="2.4" fill="none" stroke-linecap="round"></path>
 <rect x="1890.7" y="64.2" width="2.5" height="2.5" fill="#ecf0f1"></rect>
</svg>
<div class="a" style="left:0;top:1017px;width:1920px;height:3px;background:#fff;border-top:1px solid #c9c9c9"></div>
<div id="vs" class="a"></div>
<div class="a" style="left:600px;top:89px;width:21px;height:19px;background:#f0f0f0;border-left:1px solid #fcfcfc;border-right:2px solid #6d6d6d;border-bottom:2px solid #7d7d7d"></div>
<svg class="a" style="left:605px;top:94px" width="11" height="7" viewBox="0 0 11 7"><path d="M1 6L5.5 1L10 6Z" fill="#000" stroke="#000" stroke-width="0.8" stroke-linejoin="round"></path></svg>
<div class="a" style="left:600px;top:108px;width:21px;height:837px;background:#f0f0f0;border-left:1px solid #fcfcfc;border-top:1px solid #fcfcfc;border-right:2px solid #6d6d6d;border-bottom:2px solid #6d6d6d"></div>
<div class="a" style="left:600px;top:945px;width:21px;height:54px;background:#e2e2e2;border-right:1px solid #c4c4c4"></div>
<div class="a" style="left:600px;top:999px;width:21px;height:18px;background:#f0f0f0;border-left:1px solid #fcfcfc;border-top:1px solid #fcfcfc;border-right:2px solid #6d6d6d;border-bottom:1px solid #b0b0b0"></div>
<svg class="a" style="left:605px;top:1005px" width="11" height="7" viewBox="0 0 11 7"><path d="M1 1L5.5 6L10 1Z" fill="#000" stroke="#000" stroke-width="0.8" stroke-linejoin="round"></path></svg>
<div class="a" style="left:1917px;top:89px;width:1px;height:928px;background:#c4c4c4"></div><div class="a" style="left:1919px;top:29px;width:1px;height:989px;background:#5a5a5a"></div>

</body></html>
